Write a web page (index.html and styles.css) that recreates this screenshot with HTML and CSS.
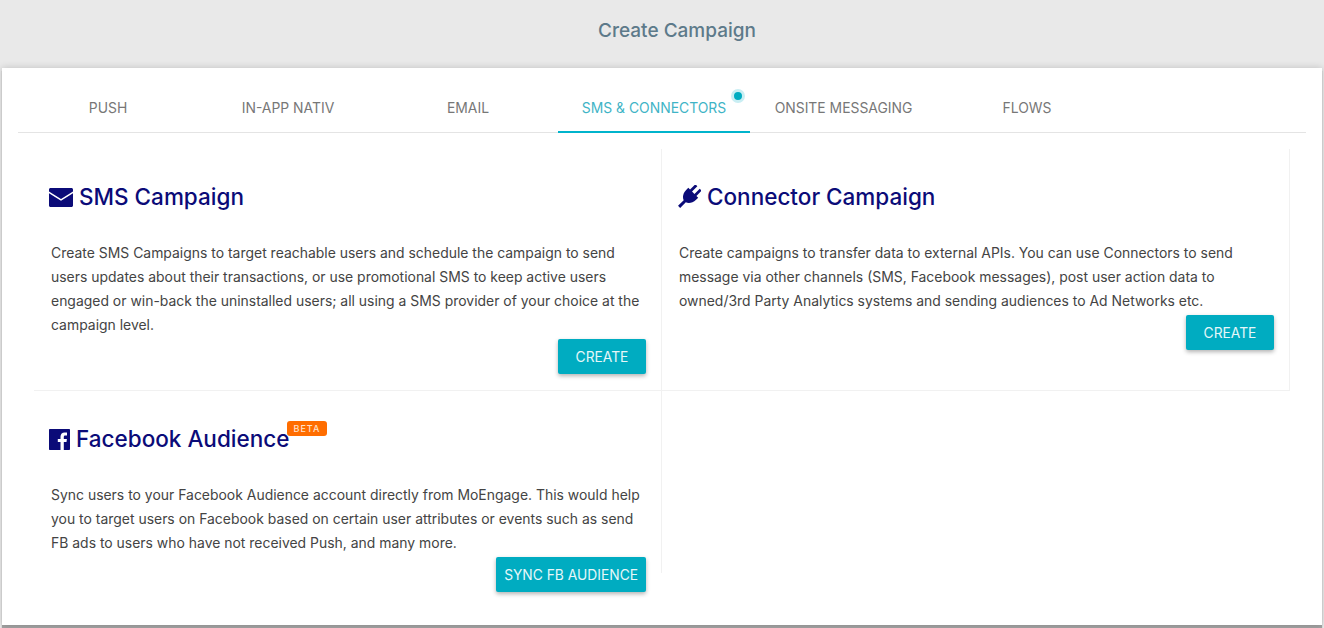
FILE: index.html
```html
<!DOCTYPE html>
<html lang="en">
  <head>
    <meta charset="UTF-8" />
    <title>Create Campaign</title>
    <link rel="stylesheet" href="styles.css">
  </head>
  <body>
    <div class="page-title">Create Campaign</div>
    <div class="panel">
      <div class="tabs">
        <a href="#" class="tab tab-push">PUSH</a>
        <a href="#" class="tab tab-inapp">IN-APP NATIV</a>
        <a href="#" class="tab tab-email">EMAIL</a>
        <a href="#" class="tab tab-sms active">SMS &amp; CONNECTORS<span class="pulse"></span></a>
        <a href="#" class="tab tab-onsite">ONSITE MESSAGING</a>
        <a href="#" class="tab tab-flows">FLOWS</a>
      </div>
      <div class="cards">
        <div class="card card-sms">
          <h2 class="card-title">
            <svg class="icon icon-mail" viewBox="0 0 24 19"><path d="M1.500 0h21C23.300 0 24 .7 24 1.500v2L12 11 0 3.500v-2C0 .7.700 0 1.500 0zM0 5.300l12 7.500 12-7.500v12.200c0 .8-.7 1.500-1.500 1.500h-21C.7 19 0 18.300 0 17.500z"/></svg>
            SMS Campaign
          </h2>
          <p class="card-text">Create SMS Campaigns to target reachable users and schedule the campaign to send users updates about their transactions, or use promotional SMS to keep active users engaged or win-back the uninstalled users; all using a SMS provider of your choice at the campaign level.</p>
          <div class="card-actions"><button class="btn">CREATE</button></div>
        </div>
        <div class="card card-connector">
          <h2 class="card-title">
            <svg class="icon icon-plug" viewBox="0 0 24 24"><path transform="rotate(45 12 12)" d="M7.500-1.500h2.800v7.500h3.400v-7.500h2.800v7.500H19v3c0 5-3 8.300-5.500 9V26h-3v-8c-2.500-.7-5.500-4-5.500-9V6h2.500z"/></svg>
            Connector Campaign
          </h2>
          <p class="card-text">Create campaigns to transfer data to external APIs. You can use Connectors to send message via other channels (SMS, Facebook messages), post user action data to owned/3rd Party Analytics systems and sending audiences to Ad Networks etc.</p>
          <div class="card-actions"><button class="btn">CREATE</button></div>
        </div>
        <div class="card card-facebook">
          <h2 class="card-title">
            <svg class="icon icon-fb" viewBox="0 0 21 21"><path d="M1 0h19c.6 0 1 .4 1 1v19c0 .6-.4 1-1 1h-5.200v-8h2.700l.4-3.100h-3.100V7.900c0-.9.300-1.500 1.500-1.500h1.700V3.600c-.3 0-1.300-.1-2.400-.1-2.400 0-4.100 1.500-4.100 4.200v2.200H8.800V13h2.700v8H1c-.6 0-1-.4-1-1V1c0-.6.400-1 1-1z"/></svg>
            Facebook Audience<span class="beta">BETA</span>
          </h2>
          <p class="card-text">Sync users to your Facebook Audience account directly from MoEngage. This would help you to target users on Facebook based on certain user attributes or events such as send FB ads to users who have not received Push, and many more.</p>
          <div class="card-actions"><button class="btn">SYNC FB AUDIENCE</button></div>
        </div>
      </div>
    </div>
  </body>
</html>
```
FILE: styles.css
```css
* {
  box-sizing: border-box;
}
html,
body {
  height: 100%;
}
body {
  margin: 0;
  background-color: #e9e9e9;
  font-family: Inter, sans-serif;
  overflow: hidden;
}
.page-title {
  height: 68px;
  padding-top: 18px;
  padding-left: 30px;
  text-align: center;
  font-size: 19px;
  line-height: 26px;
  font-weight: 500;
  color: #5d7a8a;
}
.panel {
  height: 557px;
  margin: 0 2px;
  padding: 0 16px;
  background-color: white;
  box-shadow: 0 3px 1px rgba(0, 0, 0, 0.3), 0 0 7px rgba(0, 0, 0, 0.18);
}
.tabs {
  display: flex;
  height: 65px;
  border-bottom: 1px solid #e4e4e4;
}
.tab {
  position: relative;
  display: block;
  padding-top: 32px;
  height: 65px;
  text-align: center;
  text-decoration: none;
  font-size: 13.9px;
  line-height: 17px;
  color: #777;
}
.tab-push {
  width: 180px;
}
.tab-inapp {
  width: 180px;
}
.tab-email {
  width: 180px;
}
.tab-sms {
  width: 192px;
}
.tab-onsite {
  width: 187px;
}
.tab-flows {
  width: 180px;
}
.tab.active {
  color: #3fb4c6;
  border-bottom: 2px solid #00b4cc;
}
.pulse {
  position: absolute;
  top: 21px;
  left: 173px;
  width: 14px;
  height: 14px;
  border-radius: 50%;
  background-color: #00acc1;
  border: 3px solid #c9eef3;
}
.cards {
  display: grid;
  grid-template-columns: 628px 628px;
  grid-template-rows: 242px 182px;
  margin-top: 16px;
  margin-left: 16px;
}
.card {
  padding: 33px 15px 0 15px;
}
.card-sms {
  border-right: 1px solid #f1f1f1;
  border-bottom: 1px solid #f1f1f1;
}
.card-connector {
  border-right: 1px solid #f1f1f1;
  border-bottom: 1px solid #f1f1f1;
}
.card-facebook {
  border-right: 1px solid #f1f1f1;
}
.card-title {
  display: flex;
  align-items: center;
  margin: 0;
  height: 30px;
  font-size: 22.5px;
  line-height: 30px;
  font-weight: 500;
  color: #0b0b78;
  position: relative;
}
.icon {
  fill: #0b0b78;
  flex: none;
}
.icon-mail {
  width: 24px;
  height: 19px;
  margin-right: 6px;
}
.icon-plug {
  width: 24px;
  height: 24px;
  margin-right: 6px;
}
.icon-fb {
  width: 21px;
  height: 21px;
  margin-right: 6px;
}
.beta {
  position: absolute;
  left: 238px;
  top: -3px;
  padding: 0 6.500px;
  height: 15px;
  line-height: 15px;
  border-radius: 3px;
  background-color: #ff6d00;
  color: #ffe3cc;
  font-size: 9px;
  letter-spacing: 1px;
}
.card-text {
  margin: 29px 0 0 2px;
  font-size: 13.95px;
  line-height: 24px;
  color: #444;
}
.card-actions {
  display: flex;
  justify-content: flex-end;
  margin-top: 2px;
}
.btn {
  height: 35px;
  padding: 0 8px;
  min-width: 88px;
  border: none;
  border-radius: 2px;
  background-color: #00acc1;
  color: #e6f7f9;
  font-family: inherit;
  font-size: 13.8px;
  box-shadow: 0 2px 4px rgba(0, 0, 0, 0.3);
}
```
